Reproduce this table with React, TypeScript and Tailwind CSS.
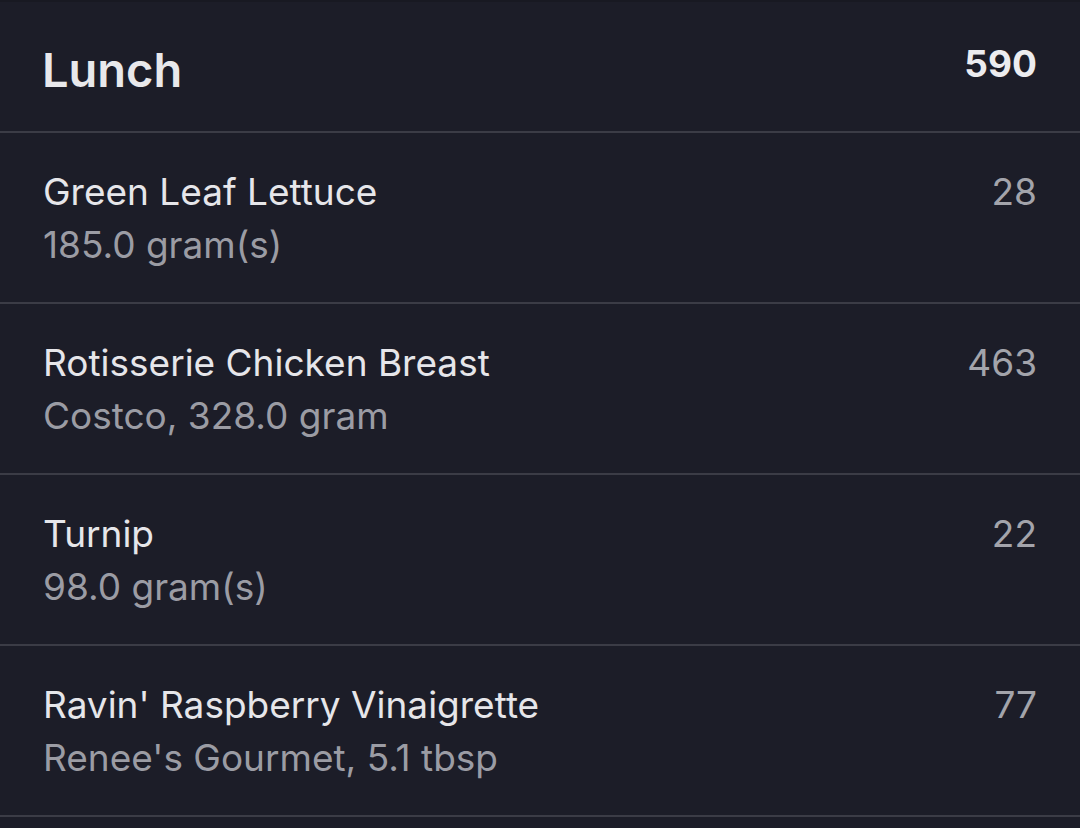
const items = [
  { name: "Green Leaf Lettuce", detail: "185.0 gram(s)", kcal: 28 },
  { name: "Rotisserie Chicken Breast", detail: "Costco, 328.0 gram", kcal: 463 },
  { name: "Turnip", detail: "98.0 gram(s)", kcal: 22 },
  { name: "Ravin' Raspberry Vinaigrette", detail: "Renee's Gourmet, 5.1 tbsp", kcal: 77 },
];

function FoodRow({ name, detail, kcal }: { name: string; detail: string; kcal: number }) {
  return (
    <div className="flex items-start justify-between border-b-2 border-[#3b3c46] pl-[43px] pr-[43px] pt-[32px] pb-[31px]">
      <div className="flex flex-col text-[37px] leading-[53px]">
        <span className="text-[#e6e6ea]">{name}</span>
        <span className="text-[#9b9ca4]">{detail}</span>
      </div>
      <span className="text-[37px] leading-[53px] text-[#a3a4ab]">{kcal}</span>
    </div>
  );
}

export default function App() {
  return (
    <div
      className="min-h-screen w-[1080px] overflow-hidden bg-[#1c1d28] border-t-2 border-[#181922]"
      style={{ fontFamily: "Inter, 'Noto Sans', sans-serif" }}
    >
      <div className="flex items-start justify-between border-b-2 border-[#3b3c46] pl-[42px] pr-[43px] pt-[39px] pb-[33px]">
        <h2 className="text-[47px] font-semibold leading-[57px] text-[#e8e8eb]">Lunch</h2>
        <span className="text-[37px] font-bold leading-[45px] text-[#ececef]">590</span>
      </div>
      {items.map((item) => (
        <FoodRow key={item.name} {...item} />
      ))}
    </div>
  );
}
